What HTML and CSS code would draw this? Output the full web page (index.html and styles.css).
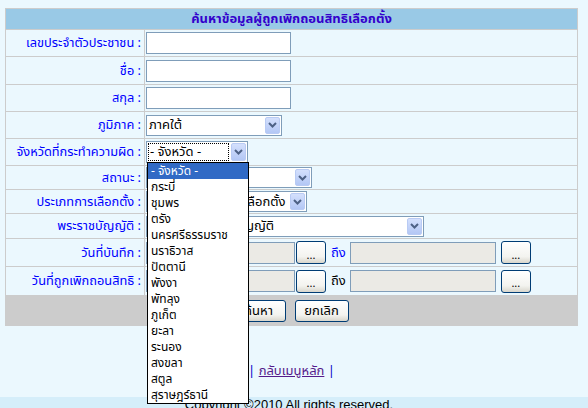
FILE: index.html
```html
<!DOCTYPE html>
<html lang="th">
<head>
<meta charset="utf-8">
<title>ค้นหาข้อมูลผู้ถูกเพิกถอนสิทธิเลือกตั้ง</title>
<link rel="stylesheet" href="styles.css">
</head>
<body>
<div class="page">
  <div class="form">
    <div class="head">ค้นหาข้อมูลผู้ถูกเพิกถอนสิทธิเลือกตั้ง</div>

    <div class="row h26">
      <div class="lbl">เลขประจำตัวประชาชน :</div>
      <div class="val"><span class="txt w145"></span></div>
    </div>
    <div class="row h27">
      <div class="lbl">ชื่อ :</div>
      <div class="val"><span class="txt w145"></span></div>
    </div>
    <div class="row h26">
      <div class="lbl">สกุล :</div>
      <div class="val"><span class="txt w145"></span></div>
    </div>
    <div class="row h26">
      <div class="lbl">ภูมิภาค :</div>
      <div class="val">
        <span class="sel w136"><span class="sel-text">ภาคใต้</span><span class="arrow"><svg width="9" height="6" viewBox="0 0 9 6"><path d="M1 1 L4.5 4.5 L8 1" fill="none" stroke="#4d6185" stroke-width="2"/></svg></span></span>
      </div>
    </div>
    <div class="row h26">
      <div class="lbl">จังหวัดที่กระทำความผิด :</div>
      <div class="val">
        <span class="sel w102 focused"><span class="sel-text"><span class="focus">- จังหวัด -</span></span><span class="arrow"><svg width="9" height="6" viewBox="0 0 9 6"><path d="M1 1 L4.5 4.5 L8 1" fill="none" stroke="#4d6185" stroke-width="2"/></svg></span></span>
      </div>
    </div>
    <div class="row h23">
      <div class="lbl">สถานะ :</div>
      <div class="val">
        <span class="sel w166"><span class="sel-text">- สถานะ -</span><span class="arrow"><svg width="9" height="6" viewBox="0 0 9 6"><path d="M1 1 L4.5 4.5 L8 1" fill="none" stroke="#4d6185" stroke-width="2"/></svg></span></span>
      </div>
    </div>
    <div class="row h23">
      <div class="lbl">ประเภทการเลือกตั้ง :</div>
      <div class="val">
        <span class="sel w161"><span class="sel-text">ทุกประเภทของการเลือกตั้ง</span><span class="arrow"><svg width="9" height="6" viewBox="0 0 9 6"><path d="M1 1 L4.5 4.5 L8 1" fill="none" stroke="#4d6185" stroke-width="2"/></svg></span></span>
      </div>
    </div>
    <div class="row h24">
      <div class="lbl">พระราชบัญญัติ :</div>
      <div class="val">
        <span class="sel w278"><span class="sel-text">- ทุกฉบับพระราชบัญญัติ</span><span class="arrow"><svg width="9" height="6" viewBox="0 0 9 6"><path d="M1 1 L4.5 4.5 L8 1" fill="none" stroke="#4d6185" stroke-width="2"/></svg></span></span>
      </div>
    </div>
    <div class="row h27">
      <div class="lbl">วันที่บันทึก :</div>
      <div class="val">
        <span class="txt dis w149"></span>
        <span class="btn dots">...</span>
        <span class="to blue">ถึง</span>
        <span class="txt dis w146"></span>
        <span class="btn dots">...</span>
      </div>
    </div>
    <div class="row h28">
      <div class="lbl">วันที่ถูกเพิกถอนสิทธิ :</div>
      <div class="val">
        <span class="txt dis w149"></span>
        <span class="btn dots">...</span>
        <span class="to">ถึง</span>
        <span class="txt dis w146"></span>
        <span class="btn dots">...</span>
      </div>
    </div>
    <div class="actions">
      <span class="btn act">ค้นหา</span>
      <span class="btn act">ยกเลิก</span>
    </div>
  </div>

  <div class="links"><span class="bar">|</span> <a href="#" class="lnk">กลับเมนูหลัก</a> <span class="bar">|</span></div>
</div>
<div class="copy">Copyright ©2010 All rights reserved.</div>

<ul class="droplist">
  <li class="hi">- จังหวัด -</li>
  <li>กระบี่</li>
  <li>ชุมพร</li>
  <li>ตรัง</li>
  <li>นครศรีธรรมราช</li>
  <li>นราธิวาส</li>
  <li>ปัตตานี</li>
  <li>พังงา</li>
  <li>พัทลุง</li>
  <li>ภูเก็ต</li>
  <li>ยะลา</li>
  <li>ระนอง</li>
  <li>สงขลา</li>
  <li>สตูล</li>
  <li>สุราษฎร์ธานี</li>
</ul>
</body>
</html>
```

FILE: styles.css
```css
html, body {
  margin: 0;
  padding: 0;
  height: 100%;
  overflow: hidden;
}
body {
  background: #ebf8fe;
  font-family: Tahoma, "Noto Sans Thai", Loma, Garuda, "DejaVu Sans", sans-serif;
  font-size: 13px;
  color: #000;
  position: relative;
}
.page {
  padding: 8px 0 0 5px;
}
.form {
  width: 573px;
  box-sizing: border-box;
  border: 1px solid #cccccc;
  background: #ebf8fe;
}
.head {
  height: 20px;
  line-height: 20px;
  background: #99c9e6;
  color: #3300cc;
  font-weight: bold;
  text-align: center;
}
.row {
  display: flex;
  border-top: 1px solid #cccccc;
}
.h23 { height: 23px; }
.h24 { height: 24px; }
.h26 { height: 26px; }
.h27 { height: 27px; }
.h28 { height: 28px; }
.lbl {
  width: 135px;
  padding-right: 3px;
  border-right: 1px solid #cccccc;
  display: flex;
  align-items: center;
  justify-content: flex-end;
  color: #0000ff;
  white-space: nowrap;
  font-size: 12.8px;
}
.val {
  flex: 1;
  display: flex;
  align-items: center;
  padding-left: 1px;
}
.txt {
  display: inline-block;
  height: 20px;
  box-sizing: content-box;
  border: 1px solid #7f9db9;
  background: #fff;
}
.txt.dis {
  background: #ebeae5;
}
.w145 { width: 143px; }
.w149 { width: 147px; }
.w146 { width: 144px; }
.sel {
  display: inline-flex;
  height: 19px;
  border: 1px solid #7f9db9;
  background: #fff;
  box-sizing: content-box;
  align-items: stretch;
}
.w136 { width: 134px; }
.w102 { width: 100px; height: 20px; }
.w166 { width: 164px; }
.w161 { width: 159px; }
.w278 { width: 276px; }
.sel-text {
  flex: 1;
  display: flex;
  align-items: center;
  padding-left: 2px;
  white-space: nowrap;
  overflow: hidden;
}
.focus {
  display: flex;
  align-items: center;
  height: 18px;
  width: 79px;
  padding-left: 2px;
  outline: 1px dotted #000;
  outline-offset: -1px;
  margin-left: -1px;
}
.arrow {
  width: 15px;
  margin: 1px;
  border: 1px solid #b9cbf4;
  border-radius: 2px;
  box-sizing: border-box;
  background: linear-gradient(#d4e0fd, #b3c7f5);
  display: flex;
  align-items: center;
  justify-content: center;
}
.btn {
  display: inline-flex;
  align-items: center;
  justify-content: center;
  box-sizing: border-box;
  border: 1px solid #003c74;
  border-radius: 3px;
  background: linear-gradient(#ffffff, #f3f3ef 70%, #d8d6cc);
  color: #000;
  font-size: 12px;
}
.dots {
  width: 30px;
  height: 23px;
  margin-left: 1px;
  padding-top: 5px;
  font-size: 11px;
}
.to {
  margin: 0 4px 0 5px;
  color: #000;
}
.to.blue { color: #0000ff; }
.to + .txt + .dots { margin-left: 5px; }
.actions {
  height: 29px;
  border-top: 1px solid #cccccc;
  background: #cccccc;
  display: flex;
  align-items: center;
  justify-content: center;
  gap: 9px;
  padding-right: 3px;
}
.act {
  width: 54px;
  height: 22px;
  font-size: 13px;
}
.links {
  width: 573px;
  text-align: center;
  margin-top: 37px;
  line-height: 16px;
  color: #0000cc;
}
.lnk {
  color: #551a8b;
  text-decoration: underline;
}
.copy {
  position: absolute;
  left: 0;
  right: 0;
  top: 395px;
  height: 30px;
  background: #d5eefa;
  text-align: center;
  padding-right: 10px;
  line-height: 16px;
  font-family: "Liberation Sans", Arial, sans-serif;
  font-size: 13px;
  border-top: 2px solid #ebf8fe;
}
.droplist {
  position: absolute;
  left: 147px;
  top: 162px;
  width: 100px;
  margin: 0;
  padding: 0;
  list-style: none;
  background: #fff;
  border: 1px solid #000;
  font-size: 12px;
}
.droplist li {
  height: 16px;
  line-height: 16px;
  padding-left: 3px;
  white-space: nowrap;
}
.droplist li.hi {
  background: #316ac5;
  color: #fff;
}
```
